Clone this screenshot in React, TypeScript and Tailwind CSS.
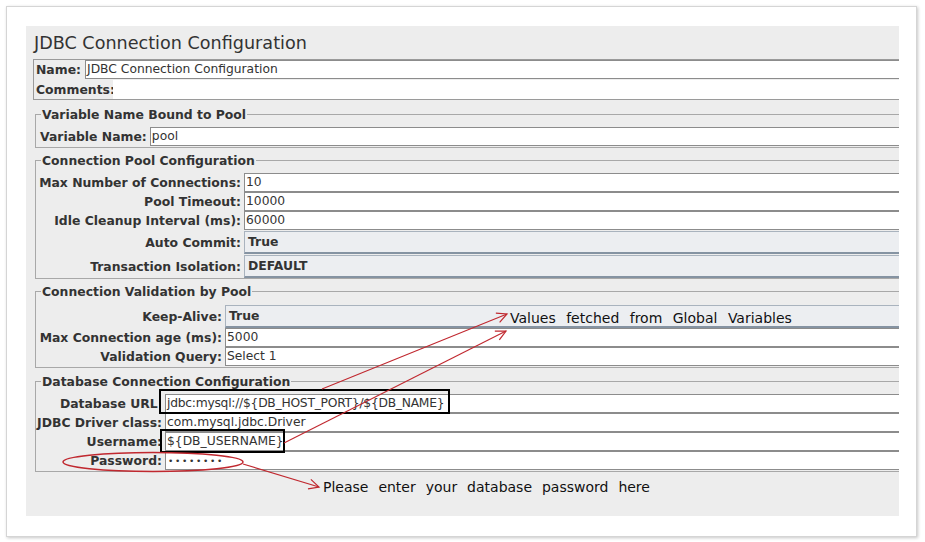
import type { ReactNode } from "react";

/*
  JDBC Connection Configuration (JMeter config element), shown as an annotated screenshot:
  a white card, the grey Swing panel inside it, four titled groups of fields,
  and red/black call-outs laid over the top.
*/

const LABEL = "shrink-0 pr-[3px] text-right text-[12.4px] font-bold leading-[19px] whitespace-nowrap text-[#333]";

function Field({ value }: { value?: ReactNode }) {
  return (
    <div className="h-[19px] flex-1 border border-[#8c8c8c] bg-white pl-px text-[12.3px] leading-[17px] whitespace-nowrap text-[#333]">
      {value}
    </div>
  );
}

function Combo({ value }: { value: string }) {
  return (
    <div className="mt-px flex h-[23px] flex-1 items-center border border-[#a9b3be] border-b-2 border-b-[#8593a2] bg-[#eceef1] pl-[3px] text-[12.4px] font-bold text-[#333]">
      {value}
    </div>
  );
}

function Row({ label, labelClass, children }: { label: string; labelClass: string; children: ReactNode }) {
  return (
    <div className="flex items-center">
      <div className={`${LABEL} ${labelClass}`}>{label}</div>
      {children}
    </div>
  );
}

function Group({ title, className, children }: { title: string; className: string; children: ReactNode }) {
  return (
    <fieldset className={`ml-[9px] w-[880px] border border-[#a8a8a8] ${className}`}>
      <legend className="ml-[5px] px-px text-[12.4px] font-bold leading-[17px] text-[#333]">{title}</legend>
      <div className="pt-[4px]">{children}</div>
    </fieldset>
  );
}

export default function App() {
  return (
    <div className="relative h-[542px] w-[925px] overflow-hidden bg-white pt-[6px] pl-[6px] font-['DejaVu_Sans',sans-serif]">
      <div className="h-[531px] w-[911px] border border-[#d5d5d5] bg-white pt-[19px] pl-[19px] shadow-[1px_1px_3px_rgba(0,0,0,0.22)]">
        <div className="h-[490px] w-[873px] overflow-hidden bg-[#ededed]">
          <div className="flex h-[33px] items-center pl-[8px] pt-[2px] text-[17.6px] text-[#333]">JDBC Connection Configuration</div>

          {/* name + comments */}
          <div className="ml-[7px] w-[880px] border border-[#9a9a9a] pl-[2px]">
            <div className="flex h-[20px] items-start">
              <div className="pr-[4px] text-[12.4px] font-bold leading-[20px] text-[#333]">Name:</div>
              <Field value="JDBC Connection Configuration" />
            </div>
            <div className="flex h-[19px] items-start">
              <div className="text-[12.4px] font-bold leading-[20px] text-[#333]">Comments:</div>
              <div className="-ml-[2px] h-[19px] flex-1 bg-white" />
            </div>
          </div>

          <Group title="Variable Name Bound to Pool" className="mt-[6px] pb-px">
            <Row label="Variable Name:" labelClass="pl-[4px]">
              <Field value="pool" />
            </Row>
          </Group>

          <Group title="Connection Pool Configuration" className="mt-[4px]">
            <Row label="Max Number of Connections:" labelClass="w-[208px]">
              <Field value="10" />
            </Row>
            <Row label="Pool Timeout:" labelClass="w-[208px]">
              <Field value="10000" />
            </Row>
            <Row label="Idle Cleanup Interval (ms):" labelClass="w-[208px]">
              <Field value="60000" />
            </Row>
            <Row label="Auto Commit:" labelClass="w-[208px]">
              <Combo value="True" />
            </Row>
            <Row label="Transaction Isolation:" labelClass="w-[208px]">
              <Combo value="DEFAULT" />
            </Row>
          </Group>

          <Group title="Connection Validation by Pool" className="mt-[4px] pb-px">
            <Row label="Keep-Alive:" labelClass="w-[189px]">
              <Combo value="True" />
            </Row>
            <Row label="Max Connection age (ms):" labelClass="w-[189px]">
              <Field value="5000" />
            </Row>
            <Row label="Validation Query:" labelClass="w-[189px]">
              <Field value="Select 1" />
            </Row>
          </Group>

          <Group title="Database Connection Configuration" className="mt-[5px] pb-px">
            <Row label={"Database URL\u00a0"} labelClass="w-[129px]">
              <Field value={<span className="tracking-[-0.25px]">{"jdbc:mysql://${DB_HOST_PORT}/${DB_NAME}"}</span>} />
            </Row>
            <Row label="JDBC Driver class:" labelClass="w-[129px]">
              <Field value="com.mysql.jdbc.Driver" />
            </Row>
            <Row label="Username:" labelClass="w-[129px]">
              <Field value="${DB_USERNAME}" />
            </Row>
            <Row label="Password:" labelClass="w-[129px]">
              <Field value={<span className="pl-px text-[9px] tracking-[1.7px]">••••••••</span>} />
            </Row>
          </Group>
        </div>
      </div>

      {/* call-outs drawn over the screenshot */}
      <svg className="pointer-events-none absolute inset-0" width="925" height="542" viewBox="0 0 925 542">
        <defs>
          <marker id="ah" markerWidth="14" markerHeight="14" refX="12" refY="7" orient="auto" markerUnits="userSpaceOnUse">
            <path d="M2,2 L12,7 L2,12" fill="none" stroke="#c0282f" strokeWidth="1.2" />
          </marker>
        </defs>
        <rect x="160" y="390" width="289" height="23" fill="none" stroke="#000" strokeWidth="2" />
        <rect x="161" y="430" width="123" height="22" fill="none" stroke="#000" strokeWidth="2" />
        <ellipse cx="153" cy="462" rx="90" ry="9.5" fill="none" stroke="#c0282f" strokeWidth="1.5" />
        <line x1="322" y1="389" x2="507" y2="314" stroke="#c0282f" strokeWidth="1.1" markerEnd="url(#ah)" />
        <line x1="284" y1="443" x2="506" y2="331" stroke="#c0282f" strokeWidth="1.1" markerEnd="url(#ah)" />
        <line x1="243" y1="464" x2="319" y2="487" stroke="#c0282f" strokeWidth="1.1" markerEnd="url(#ah)" />
      </svg>
      <div className="absolute top-[309px] left-[510px] text-[14px] leading-[18px] [word-spacing:6px] text-[#111]">
        Values fetched from Global Variables
      </div>
      <div className="absolute top-[478px] left-[323px] text-[14px] leading-[18px] [word-spacing:5.5px] text-[#111]">
        Please enter your database password here
      </div>
    </div>
  );
}
